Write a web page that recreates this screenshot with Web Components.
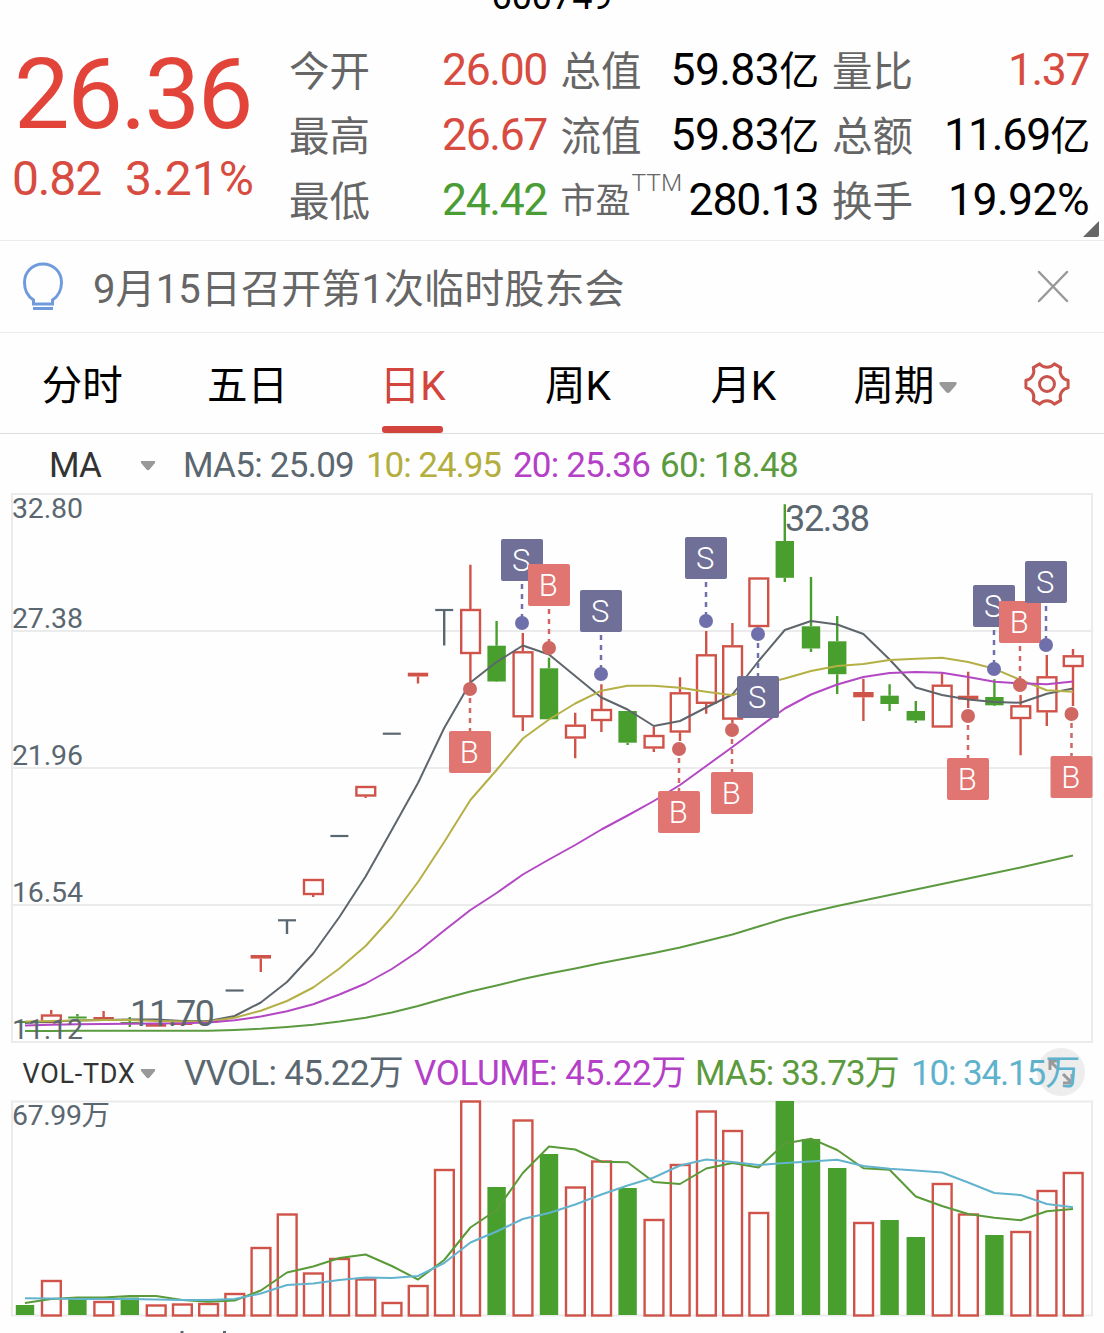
<!DOCTYPE html>
<html lang="zh-CN">
<head>
<meta charset="utf-8">
<meta name="viewport" content="width=device-width, initial-scale=1">
<title>600749</title>
<style>
  body {
    margin: 0;
    width: 1104px;
    height: 1333px;
    overflow: hidden;
    background: #fefefe;
    color: #000;
    font-family: Roboto, "Noto Sans CJK SC", sans-serif;
  }
</style>
</head>
<body>
<stock-page>
  <quote-panel code="600749" price="26.36" change="0.82" percent="3.21%">
    <quote-item label="今开" width="105" tone="up">26.00</quote-item>
    <quote-item label="总值" width="148" unit="亿">59.83</quote-item>
    <quote-item label="量比" width="81" tone="up">1.37</quote-item>
    <quote-item label="最高" width="105" tone="up">26.67</quote-item>
    <quote-item label="流值" width="148" unit="亿">59.83</quote-item>
    <quote-item label="总额" width="145" unit="亿">11.69</quote-item>
    <quote-item label="最低" width="105" tone="down">24.42</quote-item>
    <quote-item label="市盈" sup="TTM" width="130">280.13</quote-item>
    <quote-item label="换手" width="141">19.92%</quote-item>
  </quote-panel>
  <notice-bar>9月15日召开第1次临时股东会</notice-bar>
  <period-tabs active="2" tabs="分时,五日,日K,周K,月K,周期"></period-tabs>
  <indicator-bar name="MA" label-width="52">
    <fit-text width="171" style="margin-right:12px">MA5: 25.09</fit-text>
    <fit-text width="135" style="color:#b3ae3e;margin-right:12px">10: 24.95</fit-text>
    <fit-text width="137" style="color:#b440c8;margin-right:10px">20: 25.36</fit-text>
    <fit-text width="138" style="color:#5c9a3e">60: 18.48</fit-text>
  </indicator-bar>
  <candle-chart></candle-chart>
  <indicator-bar name="VOL-TDX" label-width="113" compact expand>
    <fit-text width="219" style="margin-right:11px">VVOL: 45.22万</fit-text>
    <fit-text width="272" style="color:#b440c8;margin-right:9px">VOLUME: 45.22万</fit-text>
    <fit-text width="204" style="color:#5c9a3e;margin-right:12px">MA5: 33.73万</fit-text>
    <fit-text width="168" style="color:#5fb2cc">10: 34.15万</fit-text>
  </indicator-bar>
  <volume-chart></volume-chart>
</stock-page>

<script>
const UP = '#cf5349';
const DOWN = '#489f2e';
const FLAT = '#5b6770';
const START = 25;
const STEP = 26.2;

const xAt = index => START + index * STEP;

const polyline = (values, color) => {
  const points = values.map((y, index) => `${xAt(index).toFixed(1)},${y}`).join(' ');
  return `<polyline points="${points}" fill="none" stroke="${color}" stroke-width="2" stroke-linejoin="round"/>`;
};

// text whose tracking is adjusted to fill a given width
class FitText extends HTMLElement {

  constructor() {
    super();

    this.attachShadow({mode: 'open'}).innerHTML = `
      <style>
        :host {
          display: inline-block;
          white-space: nowrap;
          flex: none;
        }

        span { white-space: pre; }
      </style>
      <span><slot></slot></span>
    `;
  }

  connectedCallback() {
    const width = parseFloat(this.getAttribute('width'));
    const span = this.shadowRoot.querySelector('span');
    const natural = span.getBoundingClientRect().width;

    span.style.letterSpacing = `${(width - natural) / this.textContent.length}px`;
    this.style.width = `${width}px`;
  }
}

class StockPage extends HTMLElement {

  constructor() {
    super();

    this.attachShadow({mode: 'open'}).innerHTML = `
      <style>
        :host {
          display: flex;
          flex-direction: column;
          width: 1104px;
          height: 1333px;
          overflow: hidden;
        }

        ::slotted(*) { flex: none; }
      </style>
      <slot></slot>
    `;
  }
}

class QuotePanel extends HTMLElement {

  constructor() {
    super();

    const attr = name => this.getAttribute(name);

    this.attachShadow({mode: 'open'}).innerHTML = `
      <style>
        :host {
          display: block;
          position: relative;
          box-sizing: border-box;
          height: 241px;
          border-bottom: 1px solid #ebebeb;
          overflow: hidden;
        }

        .code {
          height: 38px;
          line-height: 40px;
          margin-top: -23px;
          margin-bottom: 23px;
          font-size: 36px;
          text-align: center;
        }

        .content {
          display: grid;
          grid-template-columns: 289px 815px;
        }

        .price {
          padding-left: 12px;
          color: #e34439;
        }

        .last {
          margin: 2px 0 0 2px;
          height: 109px;
          line-height: 109px;
          font-size: 99px;
        }

        .change {
          display: flex;
          gap: 24px;
          line-height: 60px;
          font-size: 48px;
          color: #d74b41;
        }

        .grid {
          display: grid;
          grid-template-columns: 258px 258px 257px;
          grid-template-rows: repeat(3, 65px);
          column-gap: 13.5px;
        }

        svg {
          position: absolute;
          right: 4px;
          bottom: 2px;
        }
      </style>

      <div class="code"><fit-text width="121">${attr('code')}</fit-text></div>
      <div class="content">
        <div class="price">
          <div class="last"><fit-text width="237">${attr('price')}</fit-text></div>
          <div class="change">
            <fit-text width="89">${attr('change')}</fit-text>
            <fit-text width="129">${attr('percent')}</fit-text>
          </div>
        </div>
        <div class="grid"><slot></slot></div>
      </div>
      <svg width="18" height="18"><path d="M17 1v14q0 2-2 2H1z" fill="#666"/></svg>
    `;
  }
}

class QuoteItem extends HTMLElement {

  constructor() {
    super();

    const sup = this.getAttribute('sup');
    const unit = this.getAttribute('unit') || '';

    this.attachShadow({mode: 'open'}).innerHTML = `
      <style>
        :host {
          display: flex;
          align-items: center;
          justify-content: space-between;
          line-height: 65px;
          font-size: 44.5px;
        }

        :host([tone="up"]) { color: #d74b41; }
        :host([tone="down"]) { color: #4a9c35; }

        .label {
          display: flex;
          font-size: ${sup ? 35 : 40.5}px;
          margin-top: ${sup ? 2 : 4}px;
          color: #666;
        }

        .sup {
          font-size: 24.5px;
          font-weight: 300;
          margin: -19px 0 0 1px;
        }

        .unit { font-size: 40px; }
      </style>
      <span class="label">${this.getAttribute('label')}${sup ? `<span class="sup">${sup}</span>` : ''}</span>
      <fit-text width="${this.getAttribute('width')}">${this.textContent}${unit && `<span class="unit">${unit}</span>`}</fit-text>
    `;
  }
}

class NoticeBar extends HTMLElement {

  constructor() {
    super();

    this.attachShadow({mode: 'open'}).innerHTML = `
      <style>
        :host {
          display: flex;
          align-items: center;
          box-sizing: border-box;
          height: 92px;
          padding: 0 34px 0 22px;
          border-bottom: 1px solid #ebebeb;
          font-size: 40px;
          color: #666;
        }

        .text {
          flex: 1;
          padding-left: 29px;
          line-height: 84px;
          margin-top: 7px;
          letter-spacing: .12px;
        }
      </style>
      <svg width="42" height="50" viewBox="0 0 42 50" fill="none" stroke="#6f9bdd" stroke-width="3">
        <path d="M11.5 42v-4C6 34.500 2.500 28 2.500 20.500 2.500 10 10.500 2 21 2S39.500 10 39.500 20.500c0 7-3.500 14-9 17.500V42z"/>
        <path d="M11 46.500h20"/>
      </svg>
      <div class="text"><slot></slot></div>
      <svg width="34" height="34" stroke="#999" stroke-width="2.500" stroke-linecap="round">
        <path d="M3 2l28 29M31 2L3 31"/>
      </svg>
    `;
  }
}

class PeriodTabs extends HTMLElement {

  constructor() {
    super();

    const tabs = this.getAttribute('tabs').split(',');
    const active = parseInt(this.getAttribute('active'));

    this.attachShadow({mode: 'open'}).innerHTML = `
      <style>
        :host {
          display: grid;
          grid-template-columns: repeat(5, 165.3px) 160px 1fr;
          box-sizing: border-box;
          height: 101px;
          border-bottom: 1px solid #dedede;
          font-size: 40.5px;
        }

        .tab {
          position: relative;
          display: flex;
          align-items: center;
          justify-content: center;
        }

        .tab span {
          margin: -2px 0 0 -1px;
        }

        .tab.active {
          color: #d2443c;
        }

        .tab.active::after {
          content: '';
          position: absolute;
          bottom: 0;
          left: 51.500px;
          width: 61px;
          height: 7px;
          border-radius: 3px;
          background: #d2443c;
        }

        .arrow {
          margin: 8px 0 0 4px;
        }

        .gear {
          margin: 2px 0 0 3px;
        }
      </style>
      ${tabs.map((tab, index) => `
        <div class="tab${index === active ? ' active' : ''}"><span>${tab}</span>${
          index === tabs.length - 1
            ? '<svg class="arrow" width="20" height="13"><path d="M2 1h16q1.500 1 0 3l-6 7q-2 2-4 0L2 4Q.500 2 2 1z" fill="#999"/></svg>'
            : ''
        }</div>
      `).join('')}
      <div class="tab">
        <svg class="gear" width="48" height="46" viewBox="-24 -23 48 46" fill="none" stroke="#c9544c" stroke-width="3">
          <path d="${this.gearPath()}" stroke-linejoin="round"/>
          <circle r="7.500"/>
        </svg>
      </div>
    `;
  }

  // six blunt teeth joined by concave arcs
  gearPath() {
    const point = degrees => {
      const angle = degrees * Math.PI / 180;
      return `${(21.4 * Math.cos(angle)).toFixed(2)} ${(21.4 * Math.sin(angle)).toFixed(2)}`;
    };

    let path = `M${point(-10)}`;
    for(let tooth = 0; tooth < 6; tooth++) {
      path += `L${point(tooth * 60 + 10)}A9.500 9.500 0 0 0 ${point(tooth * 60 + 50)}`;
    }
    return `${path}Z`;
  }
}

class IndicatorBar extends HTMLElement {

  constructor() {
    super();

    const compact = this.hasAttribute('compact');

    this.attachShadow({mode: 'open'}).innerHTML = `
      <style>
        :host {
          position: relative;
          display: grid;
          grid-template-columns: 183px 1fr;
          align-items: center;
          height: ${compact ? 58 : 60}px;
          line-height: 56px;
          font-size: 35px;
          color: #5b6770;
          padding-top: ${compact ? 1 : 4}px;
          box-sizing: border-box;
        }

        .name {
          display: flex;
          align-items: center;
          justify-content: space-between;
          padding: 0 27px 0 ${compact ? 22.5 : 49}px;
          font-size: ${compact ? 27 : 35}px;
          color: #333;
        }

        .values {
          position: relative;
          z-index: 1;
          display: flex;
          padding-left: ${compact ? 1 : 0}px;
        }

        .expand {
          position: absolute;
          top: 4px;
          right: 19px;
        }
      </style>
      <div class="name">
        <fit-text width="${this.getAttribute('label-width')}">${this.getAttribute('name')}</fit-text>
        <svg width="16" height="12"><path d="M1.500 1h13q1.500.500 0 2.500l-5 6q-1.500 1.500-3 0l-5-6Q0 1.500 1.500 1z" fill="#999"/></svg>
      </div>
      <div class="values"><slot></slot></div>
      ${this.hasAttribute('expand') ? `
        <svg class="expand" width="48" height="48">
          <circle cx="24" cy="24" r="24" fill="#ededed"/>
          <path d="M13 22v-9h9M13 13l9 9M35 26v9h-9M35 35l-9-9" fill="none" stroke="#999" stroke-width="3"/>
        </svg>
      ` : ''}
    `;
  }
}

// [kind, high, top, bottom, low]; kinds: r hollow, R solid red, g green, n flat
const CANDLES = [
  ['g', 1021, 1021, 1023, 1023], ['r', 1010, 1014.5, 1023, 1023], ['g', 1014, 1016.5, 1018.5, 1020],
  ['R', 1011, 1017, 1019, 1019], ['g', 1017, 1022, 1023.5, 1027], ['R', 1024, 1024, 1026.7, 1026.7],
  ['R', 1022.5, 1022.5, 1025, 1025], ['R', 1020.8, 1020.8, 1022.6, 1022.6], ['n', 990.5, 990.5, 990.5, 990.5],
  ['R', 955, 955, 958.6, 972], ['n', 920.3, 920.3, 920.3, 934], ['r', 879, 879, 895, 897],
  ['n', 836, 836, 836, 836], ['r', 786, 786, 796.5, 798], ['n', 733.7, 733.7, 733.7, 733.7],
  ['R', 672.7, 672.7, 676.5, 683.5], ['n', 610, 610, 610, 645.5], ['r', 564.7, 609, 654, 684],
  ['g', 621, 645.7, 681.5, 682], ['r', 633, 651.3, 717.3, 731], ['g', 657.7, 668.3, 719.3, 719.3],
  ['r', 712.7, 724.7, 738.5, 758.3], ['r', 684.3, 709, 721, 732], ['g', 711, 711, 742.7, 745],
  ['r', 726.7, 735, 748.5, 752], ['r', 677.3, 692.3, 732.5, 741], ['r', 631, 654.3, 703.8, 713.7],
  ['r', 623, 645.3, 719.6, 723], ['r', 577.5, 577.5, 627, 627], ['g', 504.3, 541, 577.8, 582],
  ['g', 577, 626.3, 648.5, 652], ['g', 616, 641.3, 674.2, 694], ['R', 678.7, 692, 697.3, 721],
  ['g', 684.3, 695.7, 704, 711], ['g', 701, 711, 720.5, 723], ['r', 673.3, 684.7, 727.5, 727.5],
  ['R', 671.7, 695.7, 699.7, 708], ['g', 679.3, 697, 705.3, 706], ['r', 695, 705.3, 719, 755.3],
  ['r', 655, 676.3, 712.3, 726], ['r', 649, 655.3, 667, 706]
];

const MA5 = [1023, 1021.5, 1020.5, 1020, 1019.5, 1019.5, 1021, 1021, 1016, 1002.5, 982, 953.5, 917, 876.5, 830,
  783, 728, 682.5, 662, 645.5, 654.5, 676, 697.5, 709.5, 726, 721, 707.5, 694.5, 661, 630, 621, 624.5, 634,
  659.5, 687.5, 695, 699.5, 702, 702.7, 693.7, 688.5];
const MA10 = [1021.5, 1021, 1020.5, 1020, 1020, 1021, 1021.5, 1021.5, 1017.7, 1010.7, 1001, 987.5, 968.5, 946,
  917, 882, 842, 800, 770, 738.5, 719.5, 703.5, 690.7, 685.7, 685.7, 687.7, 691.7, 695.3, 685, 678.5, 671, 666,
  664, 660, 658.8, 657.8, 662, 668.8, 680, 690.3, 691.7];
const MA20 = [1025.5, 1024.8, 1024.3, 1024, 1023.7, 1023.5, 1023.3, 1022.5, 1020.2, 1016.5, 1011.3, 1004.3,
  994.5, 983.5, 969, 951.5, 930.5, 910, 893, 874.5, 859.5, 845, 829.5, 815.5, 801, 785, 766, 747, 727.5, 708.5,
  694.5, 684.5, 677, 673, 672, 672.7, 677, 681.7, 683.3, 684.3, 681.5];
const MA60 = [1031, 1031, 1030.8, 1030.8, 1030.8, 1030.8, 1030.8, 1030.7, 1030, 1028.8, 1027, 1024.7, 1021.5,
  1017.7, 1012.5, 1006, 998.5, 991.5, 985.5, 979, 973.5, 968.5, 963, 958, 953, 947.5, 941, 934.5, 926.5, 918.5,
  912, 906, 900.5, 895, 889.5, 884, 878.5, 873, 867.5, 861.5, 855.5];

// [side, x, dot y, badge top]
const TRADES = [
  ['B', 470, 689, 731], ['S', 522, 623, 539], ['B', 549, 648, 564], ['S', 601, 674, 590],
  ['B', 679, 749, 791], ['S', 706, 621, 537], ['B', 732, 730, 772], ['S', 758, 634, 676],
  ['B', 968, 716, 758], ['S', 994, 669, 585], ['B', 1020, 685, 601], ['S', 1046, 645, 561],
  ['B', 1071.5, 714, 756]
];

class CandleChart extends HTMLElement {

  constructor() {
    super();

    this.attachShadow({mode: 'open'}).innerHTML = `
      <style>
        :host {
          display: block;
          height: 550px;
        }

        svg { display: block; }

        text { fill: #5b6770; }
      </style>
      <svg width="1104" height="550" viewBox="0 494 1104 550" overflow="visible">
        <path d="M12 494h1080v548H12zM12 631h1080M12 768h1080M12 905h1080" fill="none" stroke="#ebebeb" stroke-width="2"/>
        ${CANDLES.map((candle, index) => this.candle(candle, xAt(index))).join('')}
        ${polyline(MA5, '#5e656b')}
        ${polyline(MA10, '#b5b045')}
        ${polyline(MA20, '#b347c4')}
        ${polyline(MA60, '#5c9a41')}
        ${[['32.80', 518], ['27.38', 628], ['21.96', 765], ['16.54', 902], ['11.12', 1039]].map(([label, y]) =>
          `<text x="12" y="${y}" font-size="28.500" textLength="71">${label}</text>`).join('')}
        <text x="785" y="531" font-size="36" textLength="85">32.38</text>
        <text x="130" y="1026" font-size="36" textLength="85">11.70</text>
        ${TRADES.map(trade => this.trade(trade)).join('')}
      </svg>
    `;
  }

  candle([kind, high, top, bottom, low], x) {
    const color = kind === 'g' ? DOWN : kind === 'n' ? FLAT : UP;
    const wick = `<path d="M${x} ${high}V${top}M${x} ${bottom}V${low}" stroke="${color}" stroke-width="2.400"/>`;

    if(kind === 'r') {
      return `${wick}<rect x="${x - 9.2}" y="${top + 1}" width="18.800" height="${bottom - top - 2}" fill="none" stroke="${color}" stroke-width="2.400"/>`;
    }
    if(kind === 'n') {
      return `${wick}<path d="M${x - 9} ${top}h18" stroke="${color}" stroke-width="2.200"/>`;
    }

    const half = kind === 'R' ? 10.2 : 9.2;
    return `${wick}<rect x="${x - half}" y="${top}" width="${half * 2}" height="${bottom - top}" fill="${color}"/>`;
  }

  trade([side, x, dot, top]) {
    const buy = side === 'B';
    const line = buy ? '#cf6763' : '#6f70ab';
    const from = top > dot ? dot + 9 : top + 45;
    const to = top > dot ? top : dot - 6;

    return `
      <path d="M${x} ${from}V${to}" stroke="${line}" stroke-width="2.500" stroke-dasharray="5 5"/>
      <circle cx="${x}" cy="${dot}" r="7" fill="${line}"/>
      <rect x="${x - 21}" y="${top}" width="42" height="42" rx="2" fill="${buy ? '#e07572' : '#706f98'}"/>
      <text x="${x - 0.7}" y="${top + 32}" font-size="31" font-weight="300" text-anchor="middle" style="fill:#fff">${side}</text>
    `;
  }
}

// [hollow, top]
const VOLUMES = [
  [0, 1305], [1, 1280], [0, 1299], [1, 1301], [0, 1297.5], [1, 1304.5], [1, 1303.5], [1, 1303], [1, 1293],
  [1, 1247], [1, 1213.5], [1, 1272.5], [1, 1258], [1, 1278.5], [1, 1302], [1, 1285], [1, 1169], [1, 1100.5],
  [0, 1187], [1, 1119.5], [0, 1154], [1, 1186.5], [1, 1160.5], [0, 1188], [1, 1219], [1, 1164], [1, 1110.5],
  [1, 1130], [1, 1212], [0, 1101], [0, 1139], [0, 1168], [1, 1222], [0, 1220], [0, 1237], [1, 1183],
  [1, 1213.5], [0, 1235], [1, 1231], [1, 1190], [1, 1172]
];

const VOL_MA5 = [1303, 1299, 1297.5, 1297.5, 1296, 1296, 1300, 1301.7, 1300.5, 1290.5, 1272.5, 1266.5, 1258,
  1254.5, 1266, 1279.5, 1260, 1227.5, 1210, 1173, 1146.5, 1149.5, 1161.7, 1162.3, 1182, 1184, 1168.5, 1163,
  1167.5, 1143.5, 1138.7, 1150, 1168.3, 1169.7, 1196.5, 1206, 1214, 1217.7, 1220.3, 1211.3, 1209];
const VOL_MA10 = [1298.3, 1298.5, 1299, 1299, 1299, 1299.5, 1300, 1300, 1299, 1293.5, 1285, 1283.5, 1280, 1277.5,
  1278, 1276, 1263, 1242.5, 1231.5, 1219, 1213, 1204.5, 1194.5, 1185.5, 1177.5, 1165.5, 1159.5, 1162, 1165,
  1163, 1161.5, 1159.7, 1166, 1168.7, 1170.5, 1172.5, 1182.5, 1193, 1195, 1204, 1207.3];

class VolumeChart extends HTMLElement {

  constructor() {
    super();

    this.attachShadow({mode: 'open'}).innerHTML = `
      <style>
        :host { display: block; }

        svg { display: block; }

        text { fill: #5b6770; }
      </style>
      <svg width="1104" height="231" viewBox="0 1102 1104 231" overflow="visible">
        <path d="M12 1101.500h1080v214H12z" fill="none" stroke="#ebebeb" stroke-width="2"/>
        ${VOLUMES.map(([hollow, top], index) => this.bar(hollow, top, xAt(index))).join('')}
        ${polyline(VOL_MA5, '#5a9a38')}
        ${polyline(VOL_MA10, '#62b3cd')}
        <text x="12" y="1125" font-size="28.500" textLength="98">67.99万</text>
        <path d="M180.500 1332h3M223 1332h3" stroke="#5b6770" stroke-width="2"/>
      </svg>
    `;
  }

  bar(hollow, top, x) {
    return hollow
      ? `<rect x="${x - 9.2}" y="${top + 1}" width="18.800" height="${1314.5 - top}" fill="none" stroke="${UP}" stroke-width="2.400"/>`
      : `<rect x="${x - 9.2}" y="${top}" width="18.400" height="${1315 - top}" fill="${DOWN}"/>`;
  }
}

customElements.define('stock-page', StockPage);
customElements.define('quote-panel', QuotePanel);
customElements.define('quote-item', QuoteItem);
customElements.define('notice-bar', NoticeBar);
customElements.define('period-tabs', PeriodTabs);
customElements.define('indicator-bar', IndicatorBar);
customElements.define('candle-chart', CandleChart);
customElements.define('volume-chart', VolumeChart);
customElements.define('fit-text', FitText);
</script>
</body>
</html>
